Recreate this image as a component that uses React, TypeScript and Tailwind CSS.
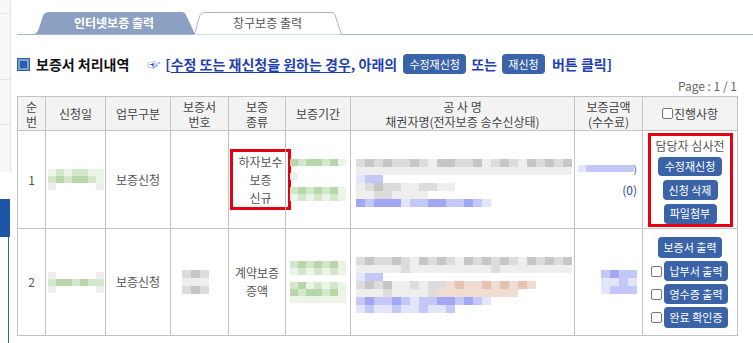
import React from 'react';

// Mosaic palette: blurred (pixelated) private data
const PAL: Record<string, string> = {
  G: 'bg-[#b7d7aa]',
  g: 'bg-[#d3e7ca]',
  w: 'bg-[#ebf4e7]',
  K: 'bg-[#c6c6c6]',
  k: 'bg-[#dcdcdc]',
  e: 'bg-[#eeeeee]',
  B: 'bg-[#a2a7f3]',
  b: 'bg-[#c4c8f8]',
  v: 'bg-[#e3e5fb]',
  O: 'bg-[#e4c2b0]',
  o: 'bg-[#f0dcd1]',
  '.': 'bg-transparent',
};

const Mosaic: React.FC<{ rows: string[]; cell: string }> = ({ rows, cell }) => (
  <div className="inline-flex flex-col">
    {rows.map((r, i) => (
      <div key={i} className="flex">
        {r.split('').map((c, j) => (
          <div key={j} className={`${cell} ${PAL[c]}`} />
        ))}
      </div>
    ))}
  </div>
);

const Btn: React.FC<{ children: React.ReactNode; className?: string }> = ({ children, className = '' }) => (
  <span
    className={`inline-flex items-center justify-center h-[20px] rounded-[4px] bg-[#3b63a8] text-white text-[11px] leading-none ${className}`}
  >
    {children}
  </span>
);

const Check: React.FC<{ className?: string }> = ({ className = '' }) => (
  <span className={`inline-block w-[11px] h-[11px] border border-[#777] rounded-[2px] bg-white ${className}`} />
);

const font = "font-['Noto_Sans_CJK_KR','Noto_Sans',sans-serif]";

export default function App() {
  const th = 'border border-[#c3c3c3] bg-[#f3f3f3] font-normal text-[12px] leading-[15px] text-[#444] text-center align-middle';
  const td = 'border border-[#c3c3c3] text-[12px] text-[#555] text-center align-middle p-0';

  return (
    <div className={`w-[753px] h-[343px] overflow-hidden bg-white flex ${font}`}>
      {/* left sidebar sliver */}
      <div className="w-[11px] flex flex-col shrink-0">
        <div className="h-[172px] bg-[#f8f8f8] border-r border-[#e2e2e2] flex flex-col">
          <div className="h-[14px] border-b border-[#e6e6e6]" />
          <div className="h-[66px] border-b border-[#e6e6e6]" />
          <div className="h-[45px] border-b border-[#e6e6e6]" />
        </div>
        <div className="h-[27px]" />
        <div className="h-[38px] w-[10px] bg-[#1c55a6]" />
        <div className="flex-1 w-[9px] border-r border-[#2d6b9c]" />
      </div>

      {/* main */}
      <div className="flex-1 pl-[6px]">
        {/* tabs */}
        <div className="pt-[12px] border-b border-[#a7b4c9] flex pl-[16px] h-[35px]">
          <div className="relative w-[162px] h-[22px] z-10">
            <svg className="absolute inset-0" width="162" height="22" viewBox="0 0 162 22">
              <path d="M0,22 C5,22 6,16 8,10 L10,4 C11,1 13,0 17,0 L148,0 C151,0 152,1 153,3 L162,22 Z" fill="#8ba0c3" />
            </svg>
            <span className="relative flex h-full items-center justify-center text-[12px] font-bold text-white">
              인터넷보증 출력
            </span>
          </div>
          <div className="relative w-[149px] h-[22px] -ml-[2px]">
            <svg className="absolute inset-0" width="149" height="23" viewBox="0 0 149 23">
              <path d="M0.5,22.5 C3,21 4,12 6,6 C7,2 9,0.5 13,0.5 L137,0.5 C140,0.5 141,1 142,3 L148.5,22.5" fill="#ffffff" stroke="#a7b4c9" />
            </svg>
            <span className="relative flex h-full items-center justify-center text-[12px] text-[#555]">
              창구보증 출력
            </span>
          </div>
        </div>

        <div className="w-[720px]">
          {/* heading */}
          <div className="mt-[18px] h-[22px] flex items-center">
            <span className="w-[11px] h-[11px] ml-px bg-[#2d5fa9] border-2 border-[#7c9fd3] outline outline-1 outline-[#2d5fa9]" />
            <span className="ml-[7px] text-[14px] font-bold text-[#111]">보증서 처리내역</span>
            <span className="ml-[18px] text-[14px] font-bold text-[#1f3fb0] flex items-center">
              <span className="text-[13px]">☞</span>
              <span className="ml-[5px]">[</span>
              <span className="underline underline-offset-2">수정 또는 재신청을 원하는 경우</span>
              <span>, 아래의</span>
              <Btn className="ml-[6px] w-[63px] font-normal">수정재신청</Btn>
              <span className="ml-[5px]">또는</span>
              <Btn className="ml-[5px] w-[43px] font-normal">재신청</Btn>
              <span className="ml-[7px]">버튼 클릭]</span>
            </span>
          </div>

          <div className="mt-[3px] h-[18px] text-right text-[12px] leading-[16px] text-[#666]">Page : 1 / 1</div>

          {/* table */}
          <table className="table-fixed border-collapse w-[720px]">
            <colgroup>
              <col className="w-[28px]" />
              <col className="w-[60px]" />
              <col className="w-[65px]" />
              <col className="w-[58px]" />
              <col className="w-[57px]" />
              <col className="w-[65px]" />
              <col className="w-[224px]" />
              <col className="w-[68px]" />
              <col className="w-[95px]" />
            </colgroup>
            <thead>
              <tr className="h-[34px]">
                <th className={th}>순<br />번</th>
                <th className={th}>신청일</th>
                <th className={th}>업무구분</th>
                <th className={th}>보증서<br />번호</th>
                <th className={th}>보증<br />종류</th>
                <th className={th}>보증기간</th>
                <th className={th}>공 사 명<br />채권자명(전자보증 송수신상태)</th>
                <th className={th}>보증금액<br />(수수료)</th>
                <th className={th}>
                  <span className="inline-flex items-center">
                    <Check className="mr-[1px]" />
                    진행사항
                  </span>
                </th>
              </tr>
            </thead>
            <tbody>
              <tr className="h-[98px]">
                <td className={td}>1</td>
                <td className={td}>
                  <div className="flex justify-center">
                    <Mosaic cell="w-[8px] h-[7px]" rows={['wgwggww', 'gGgGGgw', 'e.....e']} />
                  </div>
                </td>
                <td className={td}>보증신청</td>
                <td className={td} />
                <td className={`${td} text-left`}>
                  <div className="ml-px w-[61px] h-[61px] border-[3px] border-[#e60012] flex flex-col items-center justify-center text-[12px] leading-[18px] text-[#555]">
                    <span>하자보수</span>
                    <span>보증</span>
                    <span>신규</span>
                  </div>
                </td>
                <td className={td}>
                  <div className="flex justify-center">
                    <Mosaic
                      cell="w-[8px] h-[7px]"
                      rows={['GgGGgGw', '.......', 'e......', '.......', 'gGgGgGw', 'wgwgwgw']}
                    />
                  </div>
                </td>
                <td className={td}>
                  <div className="pl-[2px]">
                    <Mosaic
                      cell="w-[9px] h-[8px]"
                      rows={[
                        'kKkKkkKkeKKkkKekKkeKkKkK',
                        'eeeeeeeeeeeeeeeeeeeeeeee',
                        'vbb.....................',
                        'ekKkkeekkee.............',
                        'eekkeeee................',
                        'BbBBBvbbBBbbBbv.........',
                      ]}
                    />
                  </div>
                </td>
                <td className={`${td} text-right pr-[5px]`}>
                  <div className="flex flex-col items-end">
                    <div className="flex items-center">
                      <Mosaic cell="w-[8px] h-[7px]" rows={['vbbbbbb']} />
                      <span className="text-[10px] text-[#2b3f9c] leading-none">)</span>
                    </div>
                    <span className="mt-[10px] text-[12px] text-[#2b3f9c] leading-none">(0)</span>
                  </div>
                </td>
                <td className={td}>
                  <div className="mx-auto w-[85px] h-[94px] border-[3px] border-[#e60012] flex flex-col items-center pt-[2px] gap-[4px]">
                    <span className="text-[12px] leading-[16px] text-[#555] -mb-[1px]">담당자 심사전</span>
                    <Btn className="w-[64px]">수정재신청</Btn>
                    <Btn className="w-[55px]">신청 삭제</Btn>
                    <Btn className="w-[53px]">파일첨부</Btn>
                  </div>
                </td>
              </tr>
              <tr className="h-[107px]">
                <td className={td}>2</td>
                <td className={td}>
                  <div className="flex justify-center">
                    <Mosaic cell="w-[8px] h-[7px]" rows={['e.....e', 'gGGgGgg', 'e.....e']} />
                  </div>
                </td>
                <td className={td}>보증신청</td>
                <td className={td}>
                  <div className="flex justify-center">
                    <Mosaic cell="w-[9px] h-[8px]" rows={['kKk.', 'eee.', 'kKk.']} />
                  </div>
                </td>
                <td className={`${td} leading-[18px]`}>
                  계약보증<br />증액
                </td>
                <td className={td}>
                  <div className="flex justify-center">
                    <Mosaic
                      cell="w-[8px] h-[7px]"
                      rows={['gGgGgGw', 'wgwgwgw', '.......', 'gGwgwgw', 'GgGGgGw', 'wwwwwww']}
                    />
                  </div>
                </td>
                <td className={td}>
                  <div className="pl-[2px]">
                    <Mosaic
                      cell="w-[9px] h-[8px]"
                      rows={[
                        'kKkkKkeKkKkeKkKkKkeKkKkK',
                        'eeeeekeeeeeeeeekeeeeeeee',
                        'vbb.....................',
                        'kKkKeekekkoOooOoOoOo....',
                        'eeekeeeekooooooooo......',
                        'bBbbBbvbbBBbBbv.........',
                        'vbvvbvvbvvb.............',
                      ]}
                    />
                  </div>
                </td>
                <td className={`${td} text-right pr-[5px]`}>
                  <div className="flex justify-end">
                    <Mosaic cell="w-[9px] h-[8px]" rows={['bBbb', 'vvbv', 'vbbb']} />
                  </div>
                </td>
                <td className={td}>
                  <div className="flex flex-col items-end pr-[9px] gap-[3px] pt-[1px]">
                    <Btn className="w-[64px] h-[21px] mr-[6px]">보증서 출력</Btn>
                    <div className="flex items-center gap-[2px]">
                      <Check />
                      <Btn className="w-[64px]">납부서 출력</Btn>
                    </div>
                    <div className="flex items-center gap-[2px]">
                      <Check />
                      <Btn className="w-[64px]">영수증 출력</Btn>
                    </div>
                    <div className="flex items-center gap-[2px]">
                      <Check />
                      <Btn className="w-[64px] h-[21px]">완료 확인증</Btn>
                    </div>
                  </div>
                </td>
              </tr>
            </tbody>
          </table>
        </div>
      </div>
    </div>
  );
}
